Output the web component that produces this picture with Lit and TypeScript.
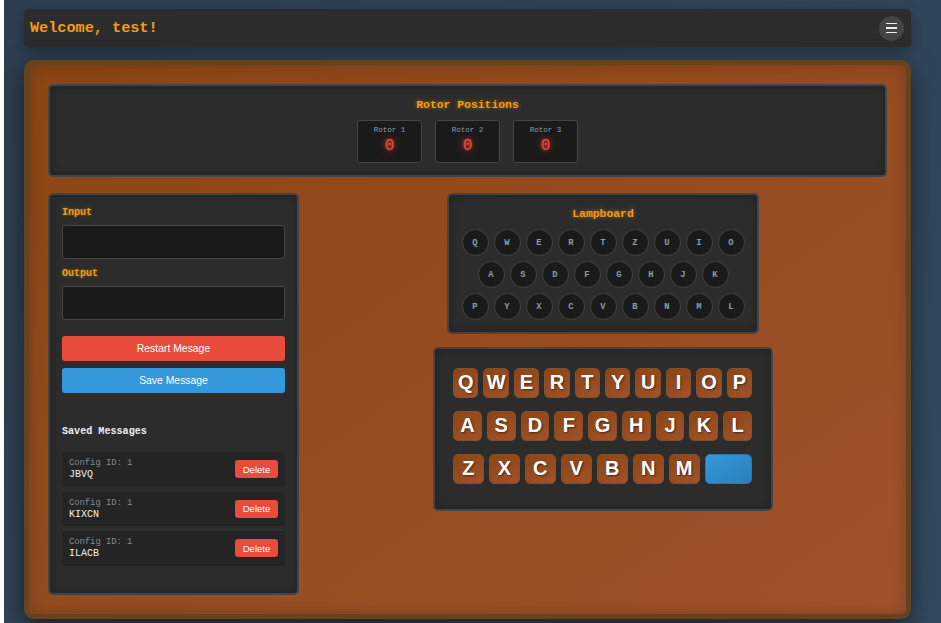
import { LitElement, html, css } from 'lit';
import { customElement } from 'lit/decorators.js';

const LAMPS = ['QWERTZUIO', 'ASDFGHJK', 'PYXCVBNML'];
const KEYS = ['QWERTYUIOP', 'ASDFGHJKL', 'ZXCVBNM'];
const SAVED = ['JBVQ', 'KIXCN', 'ILACB'];

@customElement('app-root')
export class AppRoot extends LitElement {
  static styles = css`
    :host {
      display: block;
      height: 623px;
      overflow: hidden;
      background: #fff;
      font-family: 'Liberation Mono', 'Courier New', monospace;
    }

    * {
      box-sizing: border-box;
    }

    .page {
      margin-left: 4px;
      height: 623px;
      padding: 9px 20px 0;
      background: linear-gradient(135deg, #2c3e50, #34495e);
    }

    .navbar {
      width: 887px;
      height: 38px;
      padding: 0 7px 0 6px;
      display: flex;
      align-items: center;
      justify-content: space-between;
      background: #2c2c2c;
      border-radius: 5px;
      box-shadow: 0 4px 12px rgba(0, 0, 0, 0.3);
    }

    .welcome {
      color: #f39c12;
      font-size: 15.2px;
      font-weight: 700;
    }

    .menu {
      width: 25px;
      height: 25px;
      border-radius: 50%;
      background: #444;
      display: flex;
      flex-direction: column;
      align-items: center;
      justify-content: center;
      gap: 3px;
    }

    .menu span {
      width: 11px;
      height: 1.5px;
      background: #eee;
    }

    .machine {
      width: 887px;
      height: 559px;
      margin-top: 13px;
      padding: 19px;
      background: linear-gradient(145deg, #8b4513, #a0522d);
      border: 5px solid #654321;
      border-radius: 10px;
      box-shadow: 0 8px 24px rgba(0, 0, 0, 0.5), inset 0 0 16px rgba(0, 0, 0, 0.2);
    }

    .panel {
      background: #2c2c2c;
      border: 2px solid #444;
      border-radius: 5px;
      box-shadow: inset 0 0 8px rgba(0, 0, 0, 0.3);
    }

    .rotors {
      height: 93px;
      padding-top: 13px;
      display: flex;
      flex-direction: column;
      align-items: center;
    }

    .heading {
      color: #f39c12;
      font-size: 11.4px;
      font-weight: 700;
      line-height: 13px;
      text-shadow: 0 0 4px rgba(243, 156, 18, 0.6);
    }

    .rotor-row {
      display: flex;
      gap: 13px;
      margin-top: 8px;
    }

    .rotor {
      width: 65px;
      height: 43px;
      padding-top: 5px;
      background: #1a1a1a;
      border: 1px solid #444;
      border-radius: 3px;
      text-align: center;
    }

    .rotor-label {
      color: #85a0ad;
      font-size: 7.5px;
      line-height: 9px;
    }

    .rotor-value {
      color: #f0483a;
      font-size: 16px;
      line-height: 18px;
      margin-top: 2px;
      text-shadow: 0 0 3px rgba(231, 76, 60, 0.8), 0 0 8px rgba(231, 76, 60, 0.8);
    }

    .columns {
      display: flex;
      margin-top: 16px;
    }

    .left {
      width: 251px;
      height: 402px;
      padding: 12px 12px 0;
      flex: none;
    }

    .field-label {
      color: #f39c12;
      font-size: 10px;
      font-weight: 700;
      line-height: 12px;
      text-shadow: 0 0 3px rgba(243, 156, 18, 0.5);
    }

    .field {
      height: 34px;
      margin: 6px 0 9px;
      background: #1a1a1a;
      border: 1px solid #444;
      border-radius: 3px;
    }

    .btn {
      display: block;
      width: 100%;
      height: 25px;
      border: none;
      border-radius: 3px;
      color: #fff;
      font-family: 'Liberation Sans', Arial, sans-serif;
      font-size: 10.4px;
      padding: 0;
    }

    .btn.red {
      background: #e74c3c;
      margin-top: 16px;
    }

    .btn.blue {
      background: #3498db;
      margin-top: 7px;
    }

    .saved-title {
      color: #ecf0f1;
      font-size: 10.1px;
      font-weight: 700;
      line-height: 12px;
      margin: 33px 0 14px;
    }

    .saved {
      height: 34.5px;
      margin-bottom: 5px;
      padding: 0 7px;
      display: flex;
      align-items: center;
      justify-content: space-between;
      background: #242424;
      border-radius: 3px;
    }

    .saved-config {
      color: #888;
      font-size: 8.8px;
      line-height: 11px;
    }

    .saved-text {
      color: #ecf0f1;
      font-size: 10px;
      line-height: 11px;
    }

    .delete {
      width: 43px;
      height: 18px;
      border: none;
      border-radius: 3px;
      padding: 0;
      background: #e74c3c;
      color: #fff;
      font-family: 'Liberation Sans', Arial, sans-serif;
      font-size: 9.6px;
    }

    .right {
      flex: 1;
      display: flex;
      flex-direction: column;
      align-items: center;
      padding-left: 20px;
    }

    .lampboard {
      width: 312px;
      height: 141px;
      padding-top: 13px;
      display: flex;
      flex-direction: column;
      align-items: center;
    }

    .lamps {
      display: flex;
      flex-direction: column;
      align-items: center;
      gap: 5px;
      margin-top: 8px;
    }

    .lamp-row {
      display: flex;
      gap: 5px;
    }

    .lamp {
      width: 27px;
      height: 27px;
      border-radius: 50%;
      background: #1a1a1a;
      border: 1px solid #444;
      color: #85a0ad;
      font-size: 8.8px;
      font-weight: 700;
      display: flex;
      align-items: center;
      justify-content: center;
    }

    .keyboard {
      width: 340px;
      height: 164px;
      margin-top: 13px;
      padding: 19px 19px 0 18px;
    }

    .key-row {
      display: flex;
      gap: 5px;
      margin-bottom: 13px;
    }

    .key {
      flex: 1 1 0;
      height: 30px;
      padding-bottom: 2px;
      background: linear-gradient(145deg, #8b4513, #a0522d);
      border-radius: 5px;
      border: 1px solid #85502a;
      color: #fff;
      font-family: 'Liberation Sans', Arial, sans-serif;
      font-size: 20px;
      font-weight: 700;
      text-shadow: 1px 1px 2px rgba(0, 0, 0, 0.5);
      display: flex;
      align-items: center;
      justify-content: center;
    }

    .key.space {
      flex: 1.57 1 0;
      background: linear-gradient(145deg, #3498db, #2980b9);
      border-color: #2c78ad;
    }
  `;

  render() {
    return html`
      <div class="page">
        <div class="navbar">
          <span class="welcome">Welcome, test!</span>
          <div class="menu"><span></span><span></span><span></span></div>
        </div>
        <div class="machine">
          <div class="panel rotors">
            <div class="heading">Rotor Positions</div>
            <div class="rotor-row">
              ${[1, 2, 3].map(n => html`
                <div class="rotor">
                  <div class="rotor-label">Rotor ${n}</div>
                  <div class="rotor-value">0</div>
                </div>
              `)}
            </div>
          </div>
          <div class="columns">
            <div class="panel left">
              <div class="field-label">Input</div>
              <div class="field"></div>
              <div class="field-label">Output</div>
              <div class="field"></div>
              <button class="btn red">Restart Mesage</button>
              <button class="btn blue">Save Message</button>
              <div class="saved-title">Saved Messages</div>
              ${SAVED.map(text => html`
                <div class="saved">
                  <div>
                    <div class="saved-config">Config ID: 1</div>
                    <div class="saved-text">${text}</div>
                  </div>
                  <button class="delete">Delete</button>
                </div>
              `)}
            </div>
            <div class="right">
              <div class="panel lampboard">
                <div class="heading">Lampboard</div>
                <div class="lamps">
                  ${LAMPS.map(row => html`
                    <div class="lamp-row">
                      ${[...row].map(c => html`<div class="lamp">${c}</div>`)}
                    </div>
                  `)}
                </div>
              </div>
              <div class="panel keyboard">
                ${KEYS.map((row, i) => html`
                  <div class="key-row">
                    ${[...row].map(c => html`<div class="key">${c}</div>`)}
                    ${i === 2 ? html`<div class="key space"></div>` : ''}
                  </div>
                `)}
              </div>
            </div>
          </div>
        </div>
      </div>
    `;
  }
}
